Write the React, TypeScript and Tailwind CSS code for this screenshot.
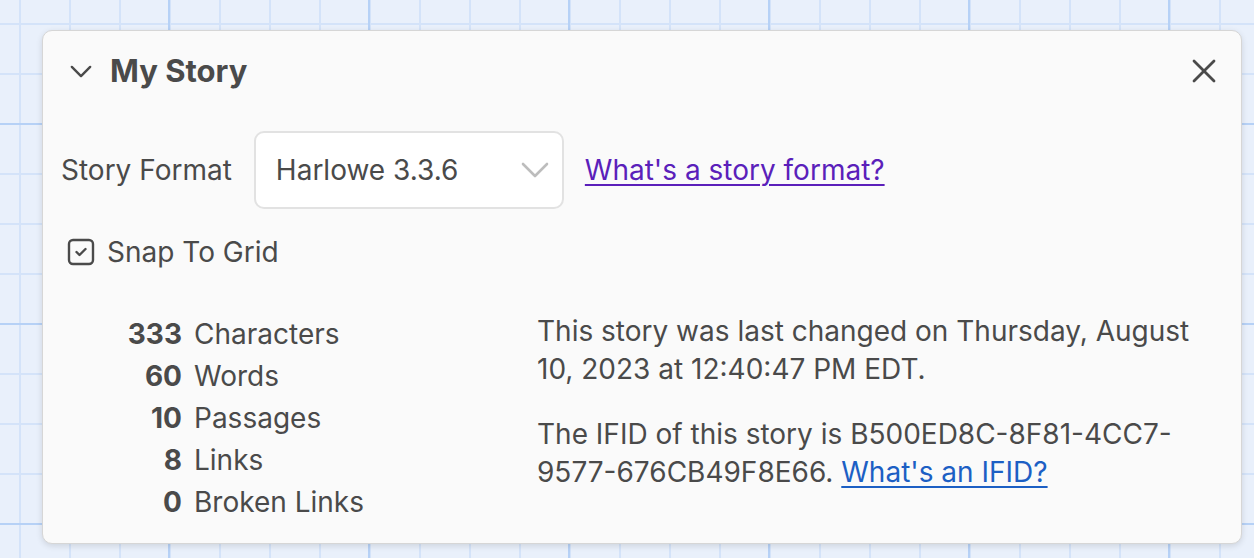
import React from "react";

const stats: { value: string; label: string }[] = [
  { value: "333", label: "Characters" },
  { value: "60", label: "Words" },
  { value: "10", label: "Passages" },
  { value: "8", label: "Links" },
  { value: "0", label: "Broken Links" },
];

function ChevronDown({ className }: { className?: string }) {
  return (
    <svg className={className} viewBox="0 0 24 14" fill="none" stroke="currentColor" strokeWidth="2.6" strokeLinecap="round" strokeLinejoin="round">
      <polyline points="2,2 12,12 22,2" />
    </svg>
  );
}

function CloseIcon() {
  return (
    <svg className="w-[24px] h-[24px] text-[#4a4a4a]" viewBox="0 0 24 24" fill="none" stroke="currentColor" strokeWidth="2.8" strokeLinecap="round">
      <line x1="2" y1="2" x2="22" y2="22" />
      <line x1="22" y1="2" x2="2" y2="22" />
    </svg>
  );
}

function CheckedBox() {
  return (
    <svg className="w-[28px] h-[28px] text-[#4a4a4a]" viewBox="0 0 28 28" fill="none" stroke="currentColor" strokeWidth="2.4" strokeLinecap="round" strokeLinejoin="round">
      <rect x="2" y="2" width="24" height="24" rx="4" />
      <polyline points="9.5,14 12.5,17 18.5,11" />
    </svg>
  );
}

export default function App() {
  return (
    <div
      className="w-[1254px] h-[558px] overflow-hidden bg-[#e9f0fb] bg-[linear-gradient(to_right,#b6d1f6_2px,transparent_2px),linear-gradient(to_bottom,#b6d1f6_2px,transparent_2px),linear-gradient(to_right,#d4e3f9_2px,transparent_2px),linear-gradient(to_bottom,#d4e3f9_2px,transparent_2px)] bg-[size:200px_200px,200px_200px,50px_50px,50px_50px] bg-[position:168px_0,0_123px,19px_0,0_23px] pt-[30px] pl-[42px] font-['Inter','Noto_Sans',sans-serif] text-[#4a4a4a]"
    >
      <div className="w-[1200px] h-[514px] rounded-[10px] bg-[#fafafa] border border-[#d6d6d6] shadow-[0_2px_6px_rgba(0,0,0,0.12)] flex flex-col">
        {/* title bar */}
        <div className="flex items-center h-[80px] pl-[27px] pr-[25px]">
          <ChevronDown className="w-[22px] h-[13px] text-[#4a4a4a]" />
          <h1 className="ml-[18px] text-[31px] font-bold text-[#4a4a4a]">My Story</h1>
          <button className="ml-auto flex items-center justify-center w-[24px] h-[24px]">
            <CloseIcon />
          </button>
        </div>

        {/* story format */}
        <div className="flex items-center pl-[18px] pr-[20px] mt-[20px] text-[28px]">
          <span>Story Format</span>
          <div className="ml-[22px] w-[310px] h-[78px] rounded-[10px] border-2 border-[#e2e2e2] bg-white flex items-center pl-[20px] pr-[13px]">
            <span>Harlowe 3.3.6</span>
            <svg className="ml-auto w-[28px] h-[16px] text-[#bdbdbd]" viewBox="0 0 28 16" fill="none" stroke="currentColor" strokeWidth="2.6" strokeLinecap="round" strokeLinejoin="round">
              <polyline points="2,2 14,14 26,2" />
            </svg>
          </div>
          <a href="#" className="ml-[21px] text-[#5b1fba] underline underline-offset-[4px] decoration-[2px]">
            What's a story format?
          </a>
        </div>

        {/* snap to grid */}
        <label className="flex items-center pl-[24px] mt-[22px] text-[28px]">
          <CheckedBox />
          <span className="ml-[12px]">Snap To Grid</span>
        </label>

        {/* details */}
        <div className="flex px-[20px] mt-[40px] text-[28px]">
          <div className="w-[474px] grid grid-cols-[119px_auto] gap-x-[12px] leading-[42px]">
            {stats.map((s) => (
              <React.Fragment key={s.label}>
                <span className="text-right font-bold">{s.value}</span>
                <span>{s.label}</span>
              </React.Fragment>
            ))}
          </div>
          <div className="w-[675px] leading-[38px] -mt-[1px]">
            <p>This story was last changed on Thursday, August 10, 2023 at 12:40:47 PM EDT.</p>
            <p className="mt-[27px]">
              The IFID of this story is B500ED8C-8F81-4CC7-9577-676CB49F8E66.{" "}
              <a href="#" className="text-[#1c5fc4] underline underline-offset-[4px] decoration-[2px]">
                What's an IFID?
              </a>
            </p>
          </div>
        </div>
      </div>
    </div>
  );
}
